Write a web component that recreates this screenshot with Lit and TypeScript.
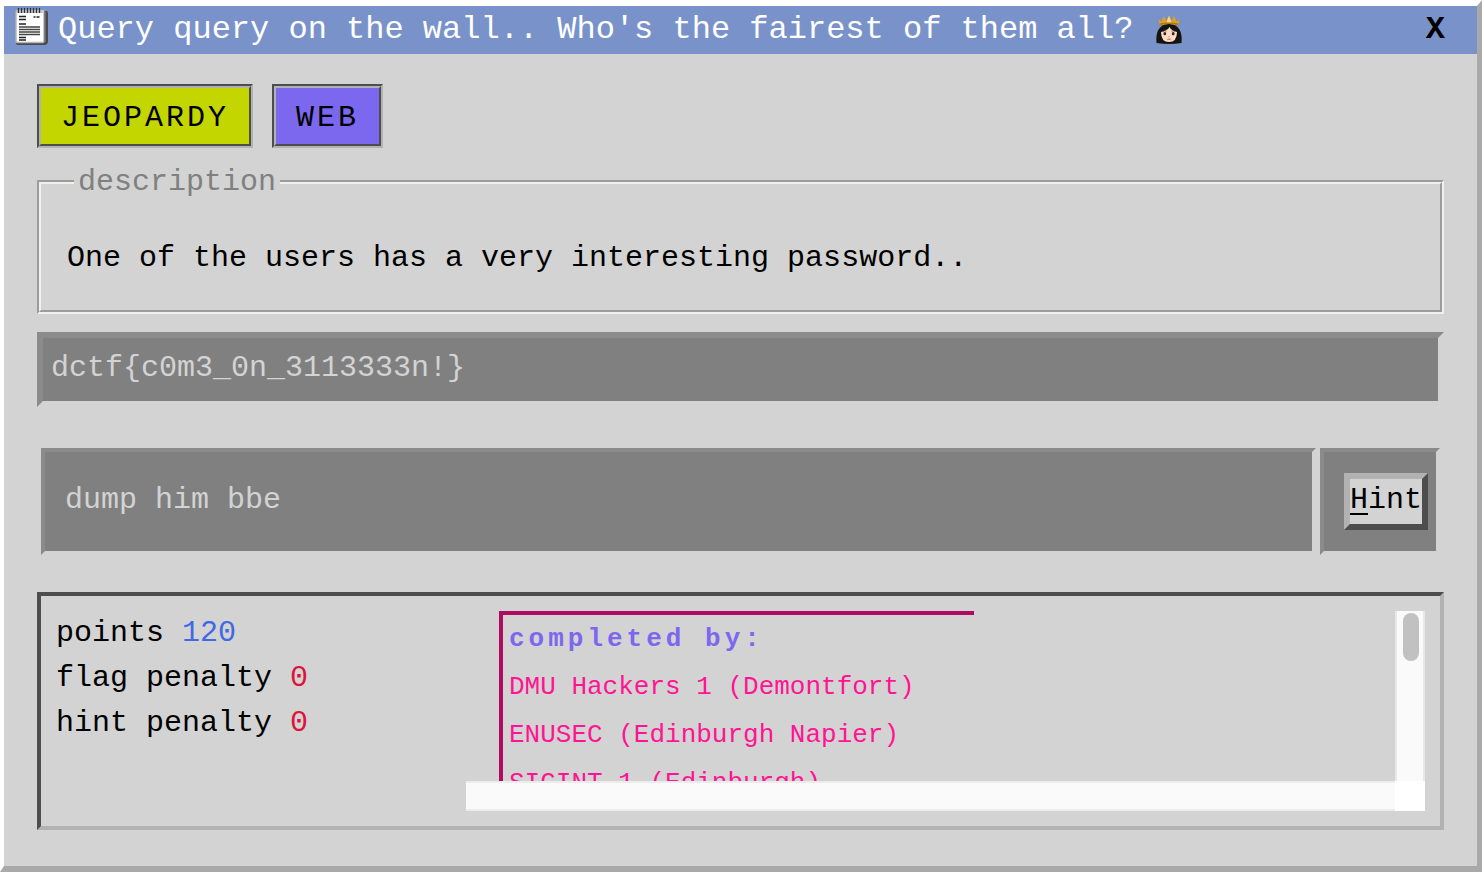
import { LitElement, html, css, svg } from "lit";
import { customElement, property, state } from "lit/decorators.js";

const notepad = svg`
  <path d="M30 3h2.500q1.500 0 1.500 2v28q0 4-4 4H5q-3 0-3-2z" fill="#4a4a4a"/>
  <rect x="2" y="2.500" width="28" height="32" rx="1.500" fill="#fff" stroke="#b4b4b4" stroke-width="1.400"/>
  <path d="M30.800 4v30" stroke="#808080" stroke-width="1.600"/>
  <path d="M3 3.500h27" stroke="#c8c8c8" stroke-width="3"/>
  <path d="M4.500 0v5M7.500 0v5M10.500 0v5M13.500 0v5M16.500 0v5M19.500 0v5M22.500 0v5M25.500 0v5" stroke="#2e2e2e" stroke-width="1.300"/>
  <path d="M5 8.500h7M5 11.500h7M19.500 9h2M22.500 9h3M5 16h7" stroke="#222" stroke-width="1.500"/>
  <path d="M5 19h21M5 21.500h21M5 24h21M5 26.500h21" stroke="#444" stroke-width="1.500"/>
  <path d="M5 29.500h7M5 32h7" stroke="#222" stroke-width="1.300"/>`;

const princess = svg`
  <path d="M1 28C0 18 3 9 13.500 9S27 18 26 28q-12 2-25 0z" fill="#17130f"/>
  <path d="M5.500 17Q12 15.500 14 12 16 16 21.500 17 21.500 27 13.500 27 5.500 27 5.500 17z" fill="#fbdcc4"/>
  <ellipse cx="9.300" cy="18.700" rx="1.400" ry="1.600" fill="#37251e"/>
  <ellipse cx="17.700" cy="18.700" rx="1.400" ry="1.600" fill="#37251e"/>
  <path d="M7.500 16.300q1.700-1 3.400 0M16 16.300q1.700-1 3.400 0" fill="none" stroke="#6b4a39" stroke-width=".7"/>
  <path d="M12.500 21.500q1 .8 2 0" fill="none" stroke="#d79b7c" stroke-width=".8"/>
  <path d="M11 24q2.500-.9 5 0-2.500 1.700-5 0z" fill="#d0605c"/>
  <path d="M4 10L3 4l3 3 2-6 3 5 2.500-6L16 6l3-5 2 6 3-3-1 6q-10-2-19 0z" fill="#dfa21f"/>
  <path d="M11 7l2.500-6L16 7l-2.500 1z" fill="#f0d98c"/>
  <path d="M4 8.500q9.500-2 19 0v1.500q-9.500-2-19 0z" fill="#b87508"/>`;

@customElement("category-tag")
export class CategoryTag extends LitElement {
  @property() label = "";
  @property() tone = "lime";

  static styles = css`
    :host { display: block; }
    .tag {
      display: block;
      margin: 0;
      padding: 0;
      border: 2px solid;
      border-color: #4d4d4d #b2b2b2 #b2b2b2 #4d4d4d;
      color: #000;
      font: 30px/36px "Liberation Mono", monospace;
      letter-spacing: 3px;
      cursor: pointer;
    }
    .face {
      display: block;
      padding: 12px 20px 8px;
      border: 2px solid;
      border-color: #b2b2b2 #4d4d4d #4d4d4d #b2b2b2;
    }
    .lime { background: #c4d600; }
    .violet { background: #7b68ee; }
  `;

  render() {
    return html`<button class="tag ${this.tone}" type="button"><span class="face">${this.label}</span></button>`;
  }
}

@customElement("solver-list")
export class SolverList extends LitElement {
  @property({ attribute: false }) teams: string[] = [];

  static styles = css`
    :host {
      display: grid;
      grid-template-columns: minmax(0, 1fr) 30px;
      grid-template-rows: 170px 30px;
    }
    .view {
      overflow: auto;
      scrollbar-width: none;
      padding-left: 33px;
    }
    .list {
      box-sizing: border-box;
      width: 475px;
      margin: 0;
      padding: 0 6px;
      list-style: none;
      border-top: 4px solid #ad0c63;
      border-left: 4px solid #ad0c63;
      color: #ff1493;
      font-size: 26px;
      line-height: 48px;
    }
    .head {
      color: #7b68ee;
      font-weight: bold;
      letter-spacing: 4px;
    }
    .bar, .floor { background: #fafafa; }
    .bar {
      border: 0 solid #e8e8e8;
      border-width: 0 2px;
      padding: 2px 4px 0 6px;
    }
    .floor {
      border: 0 solid #ececec;
      border-width: 2px 0;
    }
    .thumb {
      height: 48px;
      border-radius: 8px;
      background: #c1c1c1;
    }
    .corner { background: #fff; }
  `;

  render() {
    return html`
      <div class="view" tabindex="0">
        <ul class="list">
          <li class="head">completed by:</li>
          ${this.teams.map((t) => html`<li>${t}</li>`)}
        </ul>
      </div>
      <div class="bar"><div class="thumb"></div></div>
      <div class="floor"></div>
      <div class="corner"></div>
    `;
  }
}

@customElement("app-root")
export class AppRoot extends LitElement {
  @state() private flag = "dctf{c0m3_0n_3113333n!}";

  private teams = [
    "DMU Hackers 1 (Demontfort)",
    "ENUSEC (Edinburgh Napier)",
    "SIGINT 1 (Edinburgh)",
  ];

  static styles = css`
    :host {
      display: block;
      box-sizing: border-box;
      min-height: 100vh;
      border-style: solid;
      border-width: 6px 5px 6px 4px;
      border-color: #fff #a9a9a9 #a9a9a9 #fff;
      background: #d3d3d3;
      color: #000;
      font: 30px/36px "Liberation Mono", monospace;
    }
    .titlebar {
      display: flex;
      align-items: center;
      height: 48px;
      padding: 0 32px 0 10px;
      background: #7993ca;
      color: #fff;
    }
    .note { flex: none; width: 34px; height: 38px; margin-bottom: 6px; }
    .title {
      display: flex;
      align-items: center;
      gap: 22px;
      margin: 0 auto 0 10px;
      font-size: 32px;
      font-weight: normal;
      white-space: nowrap;
    }
    .crown { width: 28px; height: 30px; }
    .close {
      padding: 0;
      border: 0;
      background: none;
      color: #000;
      font: bold 32px/36px "Liberation Mono", monospace;
      cursor: pointer;
    }
    .content { padding: 30px 33px 36px; }
    .tags { display: flex; gap: 19px; margin-bottom: 16px; }
    .description {
      margin: 0 0 18px;
      padding: 0 26px 34px;
      min-width: 0;
      border: 4px groove #f0f0f0;
    }
    .legend { margin-left: 7px; padding: 0 4px; color: #808080; }
    .text { margin: 40px 0 0; }
    .flag {
      display: block;
      box-sizing: border-box;
      width: 100%;
      height: 75px;
      margin: 0 0 37px;
      padding: 0 8px 4px;
      border: 6px solid;
      border-color: #8b8b8b #d3d3d3 #d3d3d3 #8b8b8b;
      border-radius: 0;
      background: #808080;
      color: #d3d3d3;
      font: inherit;
      outline: none;
    }
    .hints {
      display: grid;
      grid-template-columns: 1fr auto;
      gap: 4px;
      padding: 4px;
      margin-bottom: 33px;
    }
    .cell {
      display: flex;
      align-items: center;
      padding: 21px 8px 21px 20px;
      border: 4px solid;
      border-color: #8b8b8b #d3d3d3 #d3d3d3 #8b8b8b;
      background: #808080;
      color: #d3d3d3;
    }
    .message { padding-bottom: 4px; }
    .hint {
      padding: 3px 0 6px;
      border: 6px solid;
      border-color: #b2b2b2 #4d4d4d #4d4d4d #b2b2b2;
      background: #d3d3d3;
      color: #000;
      font: inherit;
      cursor: pointer;
    }
    .key { text-decoration: underline; text-decoration-thickness: 2px; text-underline-offset: 5px; }
    .stats {
      display: grid;
      grid-template-columns: 410px minmax(0, 1fr);
      padding: 15px;
      border: 4px solid;
      border-color: #4d4d4d #b2b2b2 #b2b2b2 #4d4d4d;
      line-height: 45px;
    }
    .points { color: #4169e1; }
    .penalty { color: #dc143c; }
  `;

  render() {
    return html`
      <header class="titlebar">
        <svg class="note" viewBox="0 0 34 38" aria-hidden="true">${notepad}</svg>
        <h1 class="title">
          Query query on the wall.. Who's the fairest of them all?
          <svg class="crown" viewBox="0 0 27 30" aria-hidden="true">${princess}</svg>
        </h1>
        <button class="close" type="button" aria-label="Close">X</button>
      </header>
      <main class="content">
        <div class="tags">
          <category-tag label="JEOPARDY" tone="lime"></category-tag>
          <category-tag label="WEB" tone="violet"></category-tag>
        </div>
        <fieldset class="description">
          <legend class="legend">description</legend>
          <p class="text">One of the users has a very interesting password..</p>
        </fieldset>
        <input
          class="flag"
          aria-label="Flag"
          spellcheck="false"
          .value=${this.flag}
          @input=${(e: Event) => (this.flag = (e.target as HTMLInputElement).value)}
        />
        <section class="hints">
          <div class="cell"><span class="message">dump him bbe</span></div>
          <div class="cell">
            <button class="hint" type="button"><span class="key">H</span>int</button>
          </div>
        </section>
        <section class="stats">
          <div class="scores">
            <div>points <span class="points">120</span></div>
            <div>flag penalty <span class="penalty">0</span></div>
            <div>hint penalty <span class="penalty">0</span></div>
          </div>
          <solver-list .teams=${this.teams}></solver-list>
        </section>
      </main>
    `;
  }
}
